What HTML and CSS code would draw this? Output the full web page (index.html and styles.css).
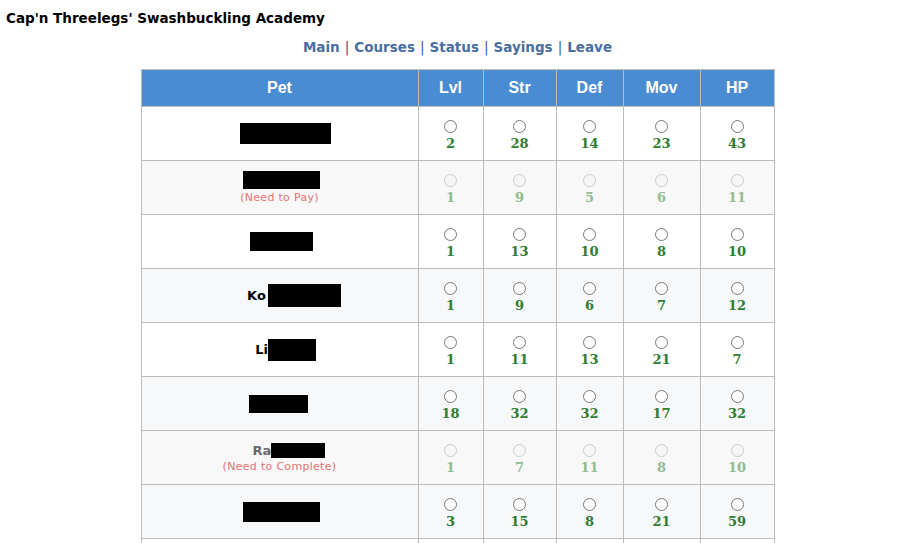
FILE: index.html
```html
<!DOCTYPE html>
<html>
<head>
<meta charset="utf-8">
<title>Cap'n Threelegs' Swashbuckling Academy</title>
<link rel="stylesheet" href="styles.css">
</head>
<body>
<div class="title">Cap'n Threelegs' Swashbuckling Academy</div>
<nav class="nav">
  <a href="#">Main</a><span class="sep">|</span><a href="#">Courses</a><span class="sep">|</span><a href="#">Status</a><span class="sep">|</span><a href="#">Sayings</a><span class="sep">|</span><a href="#">Leave</a>
</nav>
<table class="pets">
  <colgroup>
    <col class="c-pet"><col class="c-lvl"><col class="c-str"><col class="c-def"><col class="c-mov"><col class="c-hp">
  </colgroup>
  <thead>
    <tr><th>Pet</th><th>Lvl</th><th>Str</th><th>Def</th><th>Mov</th><th>HP</th></tr>
  </thead>
  <tbody>
    <tr>
      <td class="name"><span class="redact r1"></span></td>
      <td class="stat"><input type="radio" name="s"><b>2</b></td>
      <td class="stat"><input type="radio" name="s"><b>28</b></td>
      <td class="stat"><input type="radio" name="s"><b>14</b></td>
      <td class="stat"><input type="radio" name="s"><b>23</b></td>
      <td class="stat"><input type="radio" name="s"><b>43</b></td>
    </tr>
    <tr class="off">
      <td class="name"><span class="redact r2"></span><span class="note">(Need to Pay)</span></td>
      <td class="stat"><input type="radio" disabled><b>1</b></td>
      <td class="stat"><input type="radio" disabled><b>9</b></td>
      <td class="stat"><input type="radio" disabled><b>5</b></td>
      <td class="stat"><input type="radio" disabled><b>6</b></td>
      <td class="stat"><input type="radio" disabled><b>11</b></td>
    </tr>
    <tr>
      <td class="name"><span class="redact r3"></span></td>
      <td class="stat"><input type="radio" name="s"><b>1</b></td>
      <td class="stat"><input type="radio" name="s"><b>13</b></td>
      <td class="stat"><input type="radio" name="s"><b>10</b></td>
      <td class="stat"><input type="radio" name="s"><b>8</b></td>
      <td class="stat"><input type="radio" name="s"><b>10</b></td>
    </tr>
    <tr class="alt">
      <td class="name"><span class="pname p4">Ko</span><span class="redact r4"></span></td>
      <td class="stat"><input type="radio" name="s"><b>1</b></td>
      <td class="stat"><input type="radio" name="s"><b>9</b></td>
      <td class="stat"><input type="radio" name="s"><b>6</b></td>
      <td class="stat"><input type="radio" name="s"><b>7</b></td>
      <td class="stat"><input type="radio" name="s"><b>12</b></td>
    </tr>
    <tr>
      <td class="name"><span class="pname p5">Li</span><span class="redact r5"></span></td>
      <td class="stat"><input type="radio" name="s"><b>1</b></td>
      <td class="stat"><input type="radio" name="s"><b>11</b></td>
      <td class="stat"><input type="radio" name="s"><b>13</b></td>
      <td class="stat"><input type="radio" name="s"><b>21</b></td>
      <td class="stat"><input type="radio" name="s"><b>7</b></td>
    </tr>
    <tr class="alt">
      <td class="name"><span class="redact r6"></span></td>
      <td class="stat"><input type="radio" name="s"><b>18</b></td>
      <td class="stat"><input type="radio" name="s"><b>32</b></td>
      <td class="stat"><input type="radio" name="s"><b>32</b></td>
      <td class="stat"><input type="radio" name="s"><b>17</b></td>
      <td class="stat"><input type="radio" name="s"><b>32</b></td>
    </tr>
    <tr class="off">
      <td class="name"><span class="pname p7">Ra</span><span class="redact r7"></span><span class="note">(Need to Complete)</span></td>
      <td class="stat"><input type="radio" disabled><b>1</b></td>
      <td class="stat"><input type="radio" disabled><b>7</b></td>
      <td class="stat"><input type="radio" disabled><b>11</b></td>
      <td class="stat"><input type="radio" disabled><b>8</b></td>
      <td class="stat"><input type="radio" disabled><b>10</b></td>
    </tr>
    <tr class="alt">
      <td class="name"><span class="redact r8"></span></td>
      <td class="stat"><input type="radio" name="s"><b>3</b></td>
      <td class="stat"><input type="radio" name="s"><b>15</b></td>
      <td class="stat"><input type="radio" name="s"><b>8</b></td>
      <td class="stat"><input type="radio" name="s"><b>21</b></td>
      <td class="stat"><input type="radio" name="s"><b>59</b></td>
    </tr>
    <tr>
      <td class="name"><span class="redact r9"></span></td>
      <td class="stat"><input type="radio" name="s"><b>1</b></td>
      <td class="stat"><input type="radio" name="s"><b>10</b></td>
      <td class="stat"><input type="radio" name="s"><b>9</b></td>
      <td class="stat"><input type="radio" name="s"><b>12</b></td>
      <td class="stat"><input type="radio" name="s"><b>20</b></td>
    </tr>
  </tbody>
</table>
</body>
</html>
```

FILE: styles.css
```css
html, body {
  margin: 0;
  padding: 0;
  background: #ffffff;
}
body {
  font-family: "DejaVu Sans", Verdana, sans-serif;
  color: #000;
  padding-right: 2px;
}
.title {
  font-weight: bold;
  font-size: 13.5px;
  line-height: 16px;
  padding: 10px 0 0 6px;
  height: 25px;
  box-sizing: border-box;
}
.nav {
  text-align: center;
  font-weight: bold;
  font-size: 13.5px;
  line-height: 20px;
  padding: 12px 0 12px;
}
.nav a {
  color: #4a6ea0;
  text-decoration: none;
}
.nav .sep {
  color: #2f5d93;
  font-weight: normal;
  margin: 0 5px;
}
.pets {
  border-collapse: collapse;
  margin: 0 auto;
  width: 633px;
  table-layout: fixed;
}
.c-pet { width: 277px; }
.c-lvl { width: 65px; }
.c-str { width: 73px; }
.c-def { width: 67px; }
.c-mov { width: 77px; }
.c-hp { width: 74px; }
.pets th {
  background: #4a8cd2;
  color: #fff;
  font-family: "Liberation Sans", Arial, sans-serif;
  font-weight: bold;
  font-size: 16px;
  height: 37px;
  padding: 0;
  border: 1px solid #bcbcbc;
  box-sizing: border-box;
}
.pets td {
  border: 1px solid #bcbcbc;
  height: 54px;
  padding: 0;
  text-align: center;
  vertical-align: middle;
  box-sizing: border-box;
  background: #ffffff;
}
.pets tr.alt td {
  background: #f7f8fa;
}
.pets tr.off td {
  background: #f8f8f8;
}
.name {
  font-weight: bold;
  font-size: 13px;
}
.redact {
  display: inline-block;
  height: 21px;
  background: #000;
  vertical-align: middle;
}
.r1 { width: 91px; margin-left: 12px; }
.r2 { width: 77px; height: 18px; margin-left: 4px; }
.r3 { width: 63px; height: 19px; margin-left: 4px; }
.r4 { width: 73px; height: 23px; margin-left: 2px; }
.r5 { width: 48px; height: 22px; }
.r6 { width: 59px; height: 18px; margin-right: 2px; }
.r7 { width: 54px; height: 15px; }
.r8 { width: 77px; height: 20px; margin-left: 4px; }
.r9 { width: 70px; }
.pname {
  vertical-align: middle;
}
.p4 { margin-left: 29px; }
.p5 { margin-left: 12px; }
.p7 { margin-left: 19px; }
.note {
  display: block;
  font-weight: normal;
  font-size: 11px;
  line-height: 13px;
  color: #e57373;
  margin-top: 2px;
  letter-spacing: 0.3px;
}
.off .pname { color: #6a6a6a; }
.pets td.stat {
  vertical-align: top;
  padding-top: 13px;
}
.stat input {
  display: block;
  margin: 0 auto;
  width: 13px;
  height: 13px;
}
.stat b {
  display: block;
  margin-top: 3px;
  font-family: "DejaVu Serif", Georgia, serif;
  font-size: 13px;
  line-height: 16px;
  color: #2e7d32;
}
.off .stat b {
  color: #8fbc91;
}
```
